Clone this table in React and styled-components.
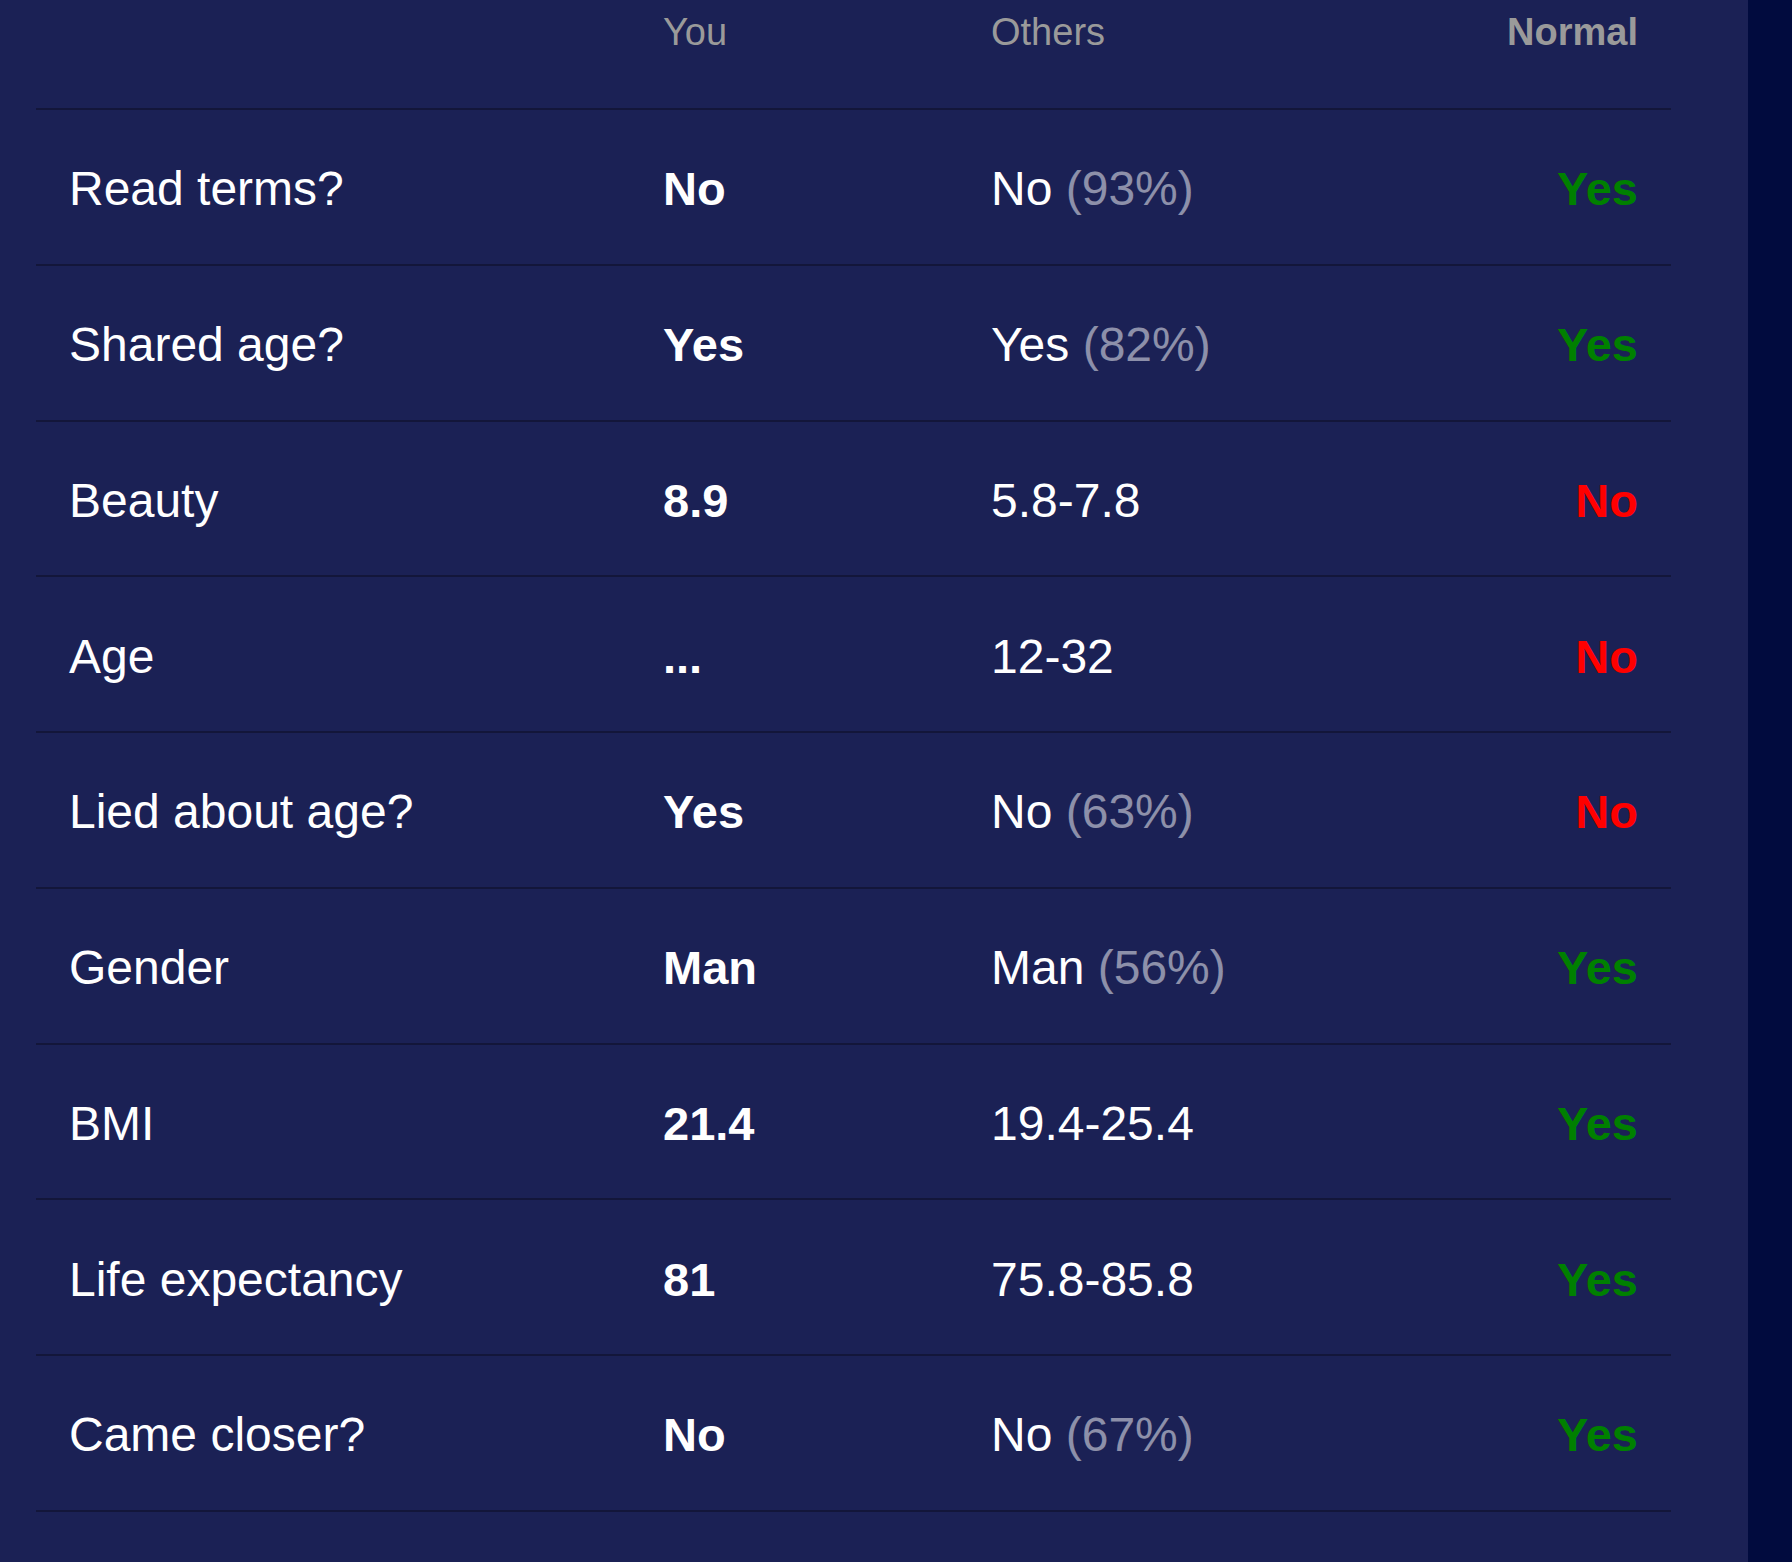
import React from 'react';
import styled, { createGlobalStyle } from 'styled-components';

const GlobalStyle = createGlobalStyle`
  html, body {
    margin: 0;
    padding: 0;
    background: #1b2155;
  }
  body {
    font-family: "Liberation Sans", Arial, sans-serif;
  }
`;

const Page = styled.div`
  display: flex;
  width: 1792px;
  min-height: 1562px;
`;

const Panel = styled.main`
  width: 1748px;
  background: #1b2155;
  padding: 0 77px 0 36px;
  box-sizing: border-box;
`;

const Strip = styled.aside`
  flex: 1;
  background: #010b3e;
`;

const Table = styled.div`
  border-bottom: 2px solid #13163a;
`;

const Row = styled.div`
  display: grid;
  grid-template-columns: 594px 328px 1fr auto;
  align-items: center;
  box-sizing: border-box;
  padding: 4px 33px 0 33px;
  height: ${p => (p.$head ? '108px' : '155.75px')};
  border-top: ${p => (p.$head ? 'none' : '2px solid #13163a')};
  ${p => p.$head && `
    align-items: start;
    padding-top: 11px;
  `}
`;

const HeadCell = styled.div`
  font-size: 38px;
  color: #9a9a9a;
  font-weight: ${p => (p.$bold ? 700 : 400)};
  text-align: ${p => (p.$right ? 'right' : 'left')};
`;

const Label = styled.div`
  font-size: 48px;
  color: #ffffff;
`;

const Mine = styled.div`
  font-size: 47px;
  font-weight: 700;
  color: #ffffff;
`;

const Others = styled.div`
  font-size: 48px;
  color: #ffffff;
`;

const Share = styled.span`
  color: rgba(255, 255, 255, 0.5);
`;

const Verdict = styled.div`
  font-size: 47px;
  font-weight: 700;
  text-align: right;
  color: ${p => (p.$ok ? '#008000' : '#ff0000')};
`;

const rows = [
  { label: 'Read terms?', you: 'No', others: 'No', share: '93%', ok: true },
  { label: 'Shared age?', you: 'Yes', others: 'Yes', share: '82%', ok: true },
  { label: 'Beauty', you: '8.9', others: '5.8-7.8', ok: false },
  { label: 'Age', you: '...', others: '12-32', ok: false },
  { label: 'Lied about age?', you: 'Yes', others: 'No', share: '63%', ok: false },
  { label: 'Gender', you: 'Man', others: 'Man', share: '56%', ok: true },
  { label: 'BMI', you: '21.4', others: '19.4-25.4', ok: true },
  { label: 'Life expectancy', you: '81', others: '75.8-85.8', ok: true },
  { label: 'Came closer?', you: 'No', others: 'No', share: '67%', ok: true },
];

export default function App() {
  return (
    <>
      <GlobalStyle />
      <Page>
        <Panel>
          <Table>
            <Row $head>
              <HeadCell />
              <HeadCell>You</HeadCell>
              <HeadCell>Others</HeadCell>
              <HeadCell $bold $right>Normal</HeadCell>
            </Row>
            {rows.map(r => (
              <Row key={r.label}>
                <Label>{r.label}</Label>
                <Mine>{r.you}</Mine>
                <Others>
                  {r.others}
                  {r.share && <Share> ({r.share})</Share>}
                </Others>
                <Verdict $ok={r.ok}>{r.ok ? 'Yes' : 'No'}</Verdict>
              </Row>
            ))}
          </Table>
        </Panel>
        <Strip />
      </Page>
    </>
  );
}
